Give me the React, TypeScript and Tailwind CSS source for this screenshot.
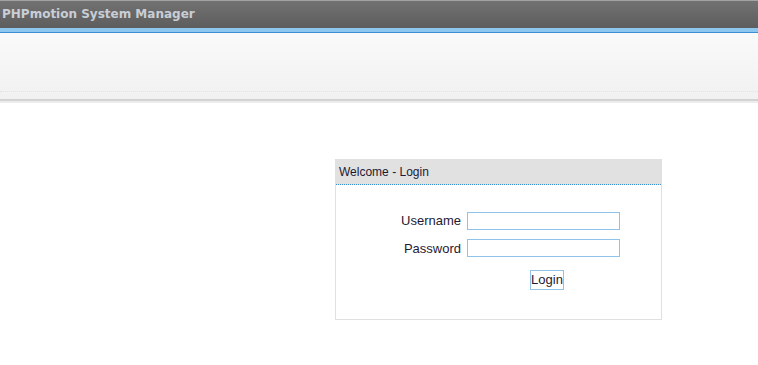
import React from "react";

export default function App() {
  return (
    <div className="min-h-screen bg-white font-['Liberation_Sans',Arial,sans-serif]">
      {/* Top bar */}
      <div className="h-[28px] border-t border-[#a3a3a5] bg-gradient-to-b from-[#727272] to-[#5d5d5d] pl-[2px]">
        <h1 className="font-['DejaVu_Sans',Verdana,sans-serif] text-[12px] font-bold leading-[26px] text-[#c9ced6]">
          PHPmotion System Manager
        </h1>
      </div>
      <div className="h-[4px] bg-[#8dc6ee]" />
      <div className="h-[1px] bg-[#3d8fd3]" />

      {/* Toolbar area */}
      <div className="h-[66px] bg-gradient-to-b from-[#fafafa] to-[#f1f1f1]">
        <div className="h-[59px] border-b border-dotted border-[#e2e2e2]" />
      </div>
      <div className="h-[2px] bg-[#d2d2d2]" />
      <div className="h-[2px] bg-[#ececec]" />

      {/* Login box */}
      <div className="ml-[335px] mt-[56px] w-[327px] border border-t-0 border-[#e0e0e0]">
        <div className="h-[26px] border-b border-dotted border-[#3d8fd3] bg-[#e1e1e1] pl-[3px] text-[12px] leading-[26px] text-[#1e1a33]">
          Welcome - Login
        </div>
        <div className="pt-[26px] pb-[29px] text-[13px] text-[#1e1a33]">
          <div className="flex items-center">
            <label className="w-[125px] text-right">Username</label>
            <input
              type="text"
              className="ml-[6px] h-[18px] w-[153px] border border-[#8fc3ea] bg-white outline-none"
            />
          </div>
          <div className="mt-[8px] flex items-center">
            <label className="w-[125px] text-right">Password</label>
            <input
              type="password"
              className="ml-[6px] h-[18px] w-[153px] border border-[#8fc3ea] bg-white outline-none"
            />
          </div>
          <div className="mt-[12px] pl-[194px]">
            <button className="h-[20px] w-[34px] border border-[#8fc3ea] bg-white text-[13px] leading-[18px] text-[#1e1a33]">
              Login
            </button>
          </div>
        </div>
      </div>
    </div>
  );
}
